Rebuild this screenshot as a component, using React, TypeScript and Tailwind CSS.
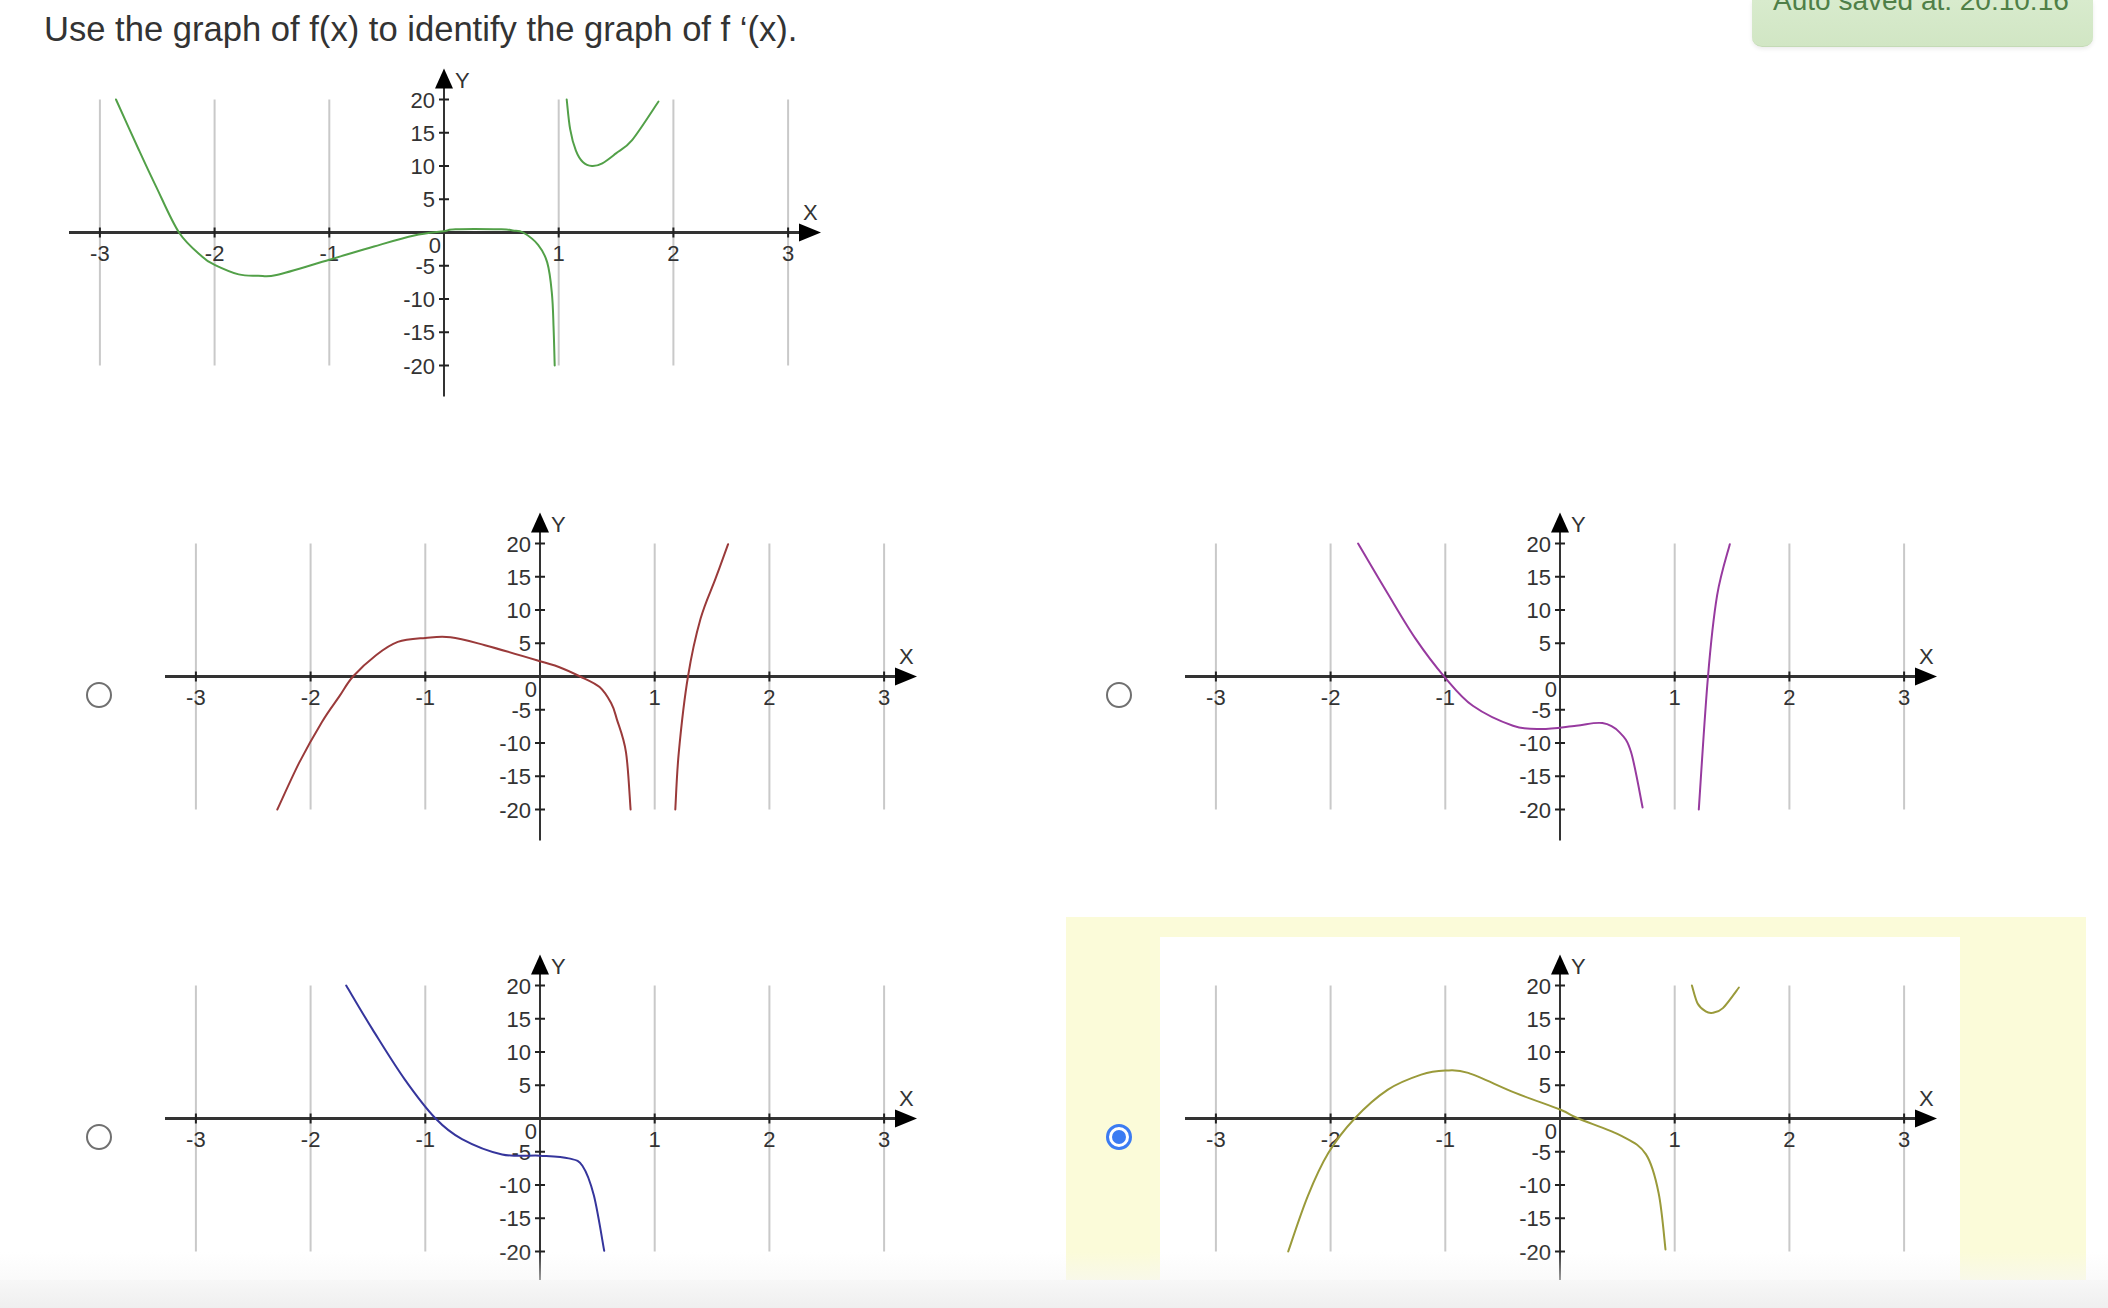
import React from 'react';

type Pt = [number, number];

// graph image geometry (each plot is an 800x400 picture)
const X0 = 400;
const Y0 = 181.5;
const UX = 114.7;
const UY = 6.65;

const toPx = ([x, y]: Pt): Pt => [X0 + x * UX, Y0 - y * UY];

function smoothPath(raw: Pt[]) {
  const p = raw.map(toPx);
  let d = `M${p[0][0].toFixed(1)},${p[0][1].toFixed(1)}`;
  for (let i = 0; i < p.length - 1; i++) {
    const a = p[i - 1] || p[i];
    const b = p[i];
    const c = p[i + 1];
    const e = p[i + 2] || c;
    const c1x = b[0] + (c[0] - a[0]) / 6;
    const c1y = b[1] + (c[1] - a[1]) / 6;
    const c2x = c[0] - (e[0] - b[0]) / 6;
    const c2y = c[1] - (e[1] - b[1]) / 6;
    d += ` C${c1x.toFixed(1)},${c1y.toFixed(1)} ${c2x.toFixed(1)},${c2y.toFixed(1)} ${c[0].toFixed(1)},${c[1].toFixed(1)}`;
  }
  return d;
}

const curves: Record<string, { color: string; branches: Pt[][] }> = {
  f: {
    color: '#52a048',
    branches: [
      [[-2.86, 20], [-2.66, 12.4], [-2.51, 6.9], [-2.31, 0], [-2.11, -3.6], [-2.0, -4.85], [-1.79, -6.3], [-1.62, -6.5], [-1.46, -6.4], [-1.0, -4.1], [-0.61, -2.1], [-0.26, -0.45], [0, 0.2], [0.1, 0.5], [0.5, 0.5], [0.6, 0.3], [0.69, 0], [0.82, -1.85], [0.9, -4.5], [0.94, -9], [0.955, -14], [0.965, -20]],
      [[1.07, 20], [1.1, 15.5], [1.15, 12.3], [1.21, 10.6], [1.29, 10], [1.38, 10.4], [1.5, 11.9], [1.64, 13.9], [1.87, 19.7]],
    ],
  },
  a: {
    color: '#9a3a3a',
    branches: [
      [[-2.29, -20], [-2.1, -13], [-1.9, -6.8], [-1.75, -3], [-1.63, 0], [-1.43, 3.2], [-1.24, 5.2], [-1.0, 5.8], [-0.78, 5.9], [-0.48, 4.7], [0, 2.3], [0.17, 1.4], [0.35, 0], [0.52, -1.6], [0.62, -4], [0.67, -6.4], [0.75, -11.4], [0.79, -20]],
      [[1.18, -20], [1.21, -11.4], [1.29, 0], [1.4, 8.7], [1.53, 14.7], [1.64, 19.9]],
    ],
  },
  b: {
    color: '#973a9f',
    branches: [
      [[-1.76, 20], [-1.51, 12.7], [-1.26, 5.7], [-1.0, -0.2], [-0.76, -4.4], [-0.41, -7.4], [-0.16, -7.9], [0.14, -7.4], [0.37, -7.0], [0.52, -8.4], [0.62, -11.4], [0.72, -19.7]],
      [[1.21, -20], [1.29, 0], [1.37, 12.2], [1.48, 19.9]],
    ],
  },
  c: {
    color: '#35359c',
    branches: [
      [[-1.69, 20], [-1.46, 13.4], [-1.18, 5.9], [-0.91, 0], [-0.68, -3.1], [-0.33, -5.4], [0, -5.6], [0.25, -6.0], [0.37, -7.1], [0.47, -11.6], [0.56, -19.9]],
    ],
  },
  d: {
    color: '#9a9a3a',
    branches: [
      [[-2.37, -20], [-2.2, -11.7], [-2.02, -5.2], [-1.79, 0], [-1.5, 4.35], [-1.21, 6.6], [-1.0, 7.2], [-0.8, 6.85], [-0.39, 3.85], [0, 1.35], [0.16, 0], [0.54, -2.65], [0.75, -5.4], [0.86, -11.2], [0.92, -19.7]],
      [[1.15, 20], [1.2, 17.3], [1.27, 16.1], [1.33, 15.9], [1.42, 16.6], [1.56, 19.7]],
    ],
  },
};

function Graph({ id }: { id: string }) {
  const curve = curves[id];
  const xs = [-3, -2, -1, 1, 2, 3];
  const ys = [20, 15, 10, 5, -5, -10, -15, -20];
  return (
    <svg width="800" height="400" viewBox="0 0 800 400" className="block bg-white">
      <g stroke="#c9c9c9" strokeWidth="2">
        {[-3, -2, -1, 0, 1, 2, 3].map((i) => (
          <line key={i} x1={X0 + i * UX} x2={X0 + i * UX} y1={Y0 - 20 * UY} y2={Y0 + 20 * UY} />
        ))}
      </g>
      <line x1={X0 - 375} x2={X0 + 358} y1={Y0} y2={Y0} stroke="#333" strokeWidth="3" />
      <polygon points={`${X0 + 377},${Y0} ${X0 + 355},${Y0 - 9} ${X0 + 355},${Y0 + 9}`} fill="#000" />
      <line x1={X0} x2={X0} y1={Y0 - 147} y2={Y0 + 164} stroke="#333" strokeWidth="2" />
      <polygon points={`${X0},${Y0 - 164} ${X0 - 9},${Y0 - 144} ${X0 + 9},${Y0 - 144}`} fill="#000" />
      <g stroke="#222" strokeWidth="2">
        {xs.map((i) => (
          <line key={i} x1={X0 + i * UX} x2={X0 + i * UX} y1={Y0 - 5} y2={Y0 + 5} />
        ))}
        {ys.map((v) => (
          <line key={v} x1={X0 - 5} x2={X0 + 5} y1={Y0 - v * UY} y2={Y0 - v * UY} />
        ))}
      </g>
      <g fill="#333" fontSize="22" fontFamily="'Liberation Sans', Arial, sans-serif">
        {xs.map((i) => (
          <text key={i} x={X0 + i * UX} y={Y0 + 28} textAnchor="middle">
            {i < 0 ? `-${-i}` : i}
          </text>
        ))}
        <text x={X0 - 3} y={Y0 + 20} textAnchor="end">0</text>
        {ys.map((v) => (
          <text key={v} x={X0 - 9} y={Y0 - v * UY + 8} textAnchor="end">
            {v}
          </text>
        ))}
        <text x={X0 + 11} y={Y0 - 145}>Y</text>
        <text x={X0 + 359} y={Y0 - 13}>X</text>
      </g>
      <g fill="none" stroke={curve.color} strokeWidth="2" strokeLinejoin="round" strokeLinecap="round">
        {curve.branches.map((b, i) => (
          <path key={i} d={smoothPath(b)} />
        ))}
      </g>
    </svg>
  );
}

function Radio({ checked }: { checked?: boolean }) {
  if (checked) {
    return (
      <div className="flex h-[26px] w-[26px] shrink-0 items-center justify-center rounded-full border-[3px] border-[#3b7bf2] bg-white">
        <div className="h-[14px] w-[14px] rounded-full bg-[#3b7bf2]" />
      </div>
    );
  }
  return <div className="h-[26px] w-[26px] shrink-0 rounded-full border-2 border-[#707070] bg-white" />;
}

function Option({ id, checked }: { id: string; checked?: boolean }) {
  return (
    <div className={`flex items-center gap-[28px] py-[20px] pl-[40px] ${checked ? 'bg-[#fbfbd9]' : ''}`}>
      <Radio checked={checked} />
      <Graph id={id} />
    </div>
  );
}

export default function App() {
  return (
    <div className="relative h-[1308px] w-[2108px] overflow-hidden bg-white font-['Liberation_Sans',Arial,sans-serif]">
      <div className="pl-[44px] pt-[9px]">
        <h1 className="text-[34.6px] leading-[40px] text-[#333]">
          Use the graph of f(x) to identify the graph of f ‘(x).
        </h1>
      </div>

      <div className="ml-[44px] mt-[2px] w-[800px]">
        <Graph id="f" />
      </div>

      <div className="ml-[46px] mt-[24px] grid w-[2040px] grid-cols-2 gap-y-[2px]">
        <Option id="a" />
        <Option id="b" />
        <Option id="c" />
        <Option id="d" checked />
      </div>

      {/* auto-save toast, scrolled half out of view */}
      <div className="absolute left-[1752px] top-0 h-[47px] w-[341px] overflow-hidden rounded-b-[10px] border-b border-[#c4dab6] bg-gradient-to-b from-[#d8ebcd] to-[#d1e6c4] shadow-[0_2px_4px_rgba(0,0,0,0.08)]">
        <div className="mt-[-13px] pl-[21px] text-[28px] leading-[28px] text-[#4f7f47]">Auto saved at: 20:10:16</div>
      </div>

      <div className="absolute bottom-0 left-0 right-0 h-[56px] bg-[linear-gradient(to_bottom,rgba(250,250,250,0)_0%,rgba(246,246,246,0.55)_50%,#f7f7f7_50%,#efefef_100%)]" />
    </div>
  );
}
